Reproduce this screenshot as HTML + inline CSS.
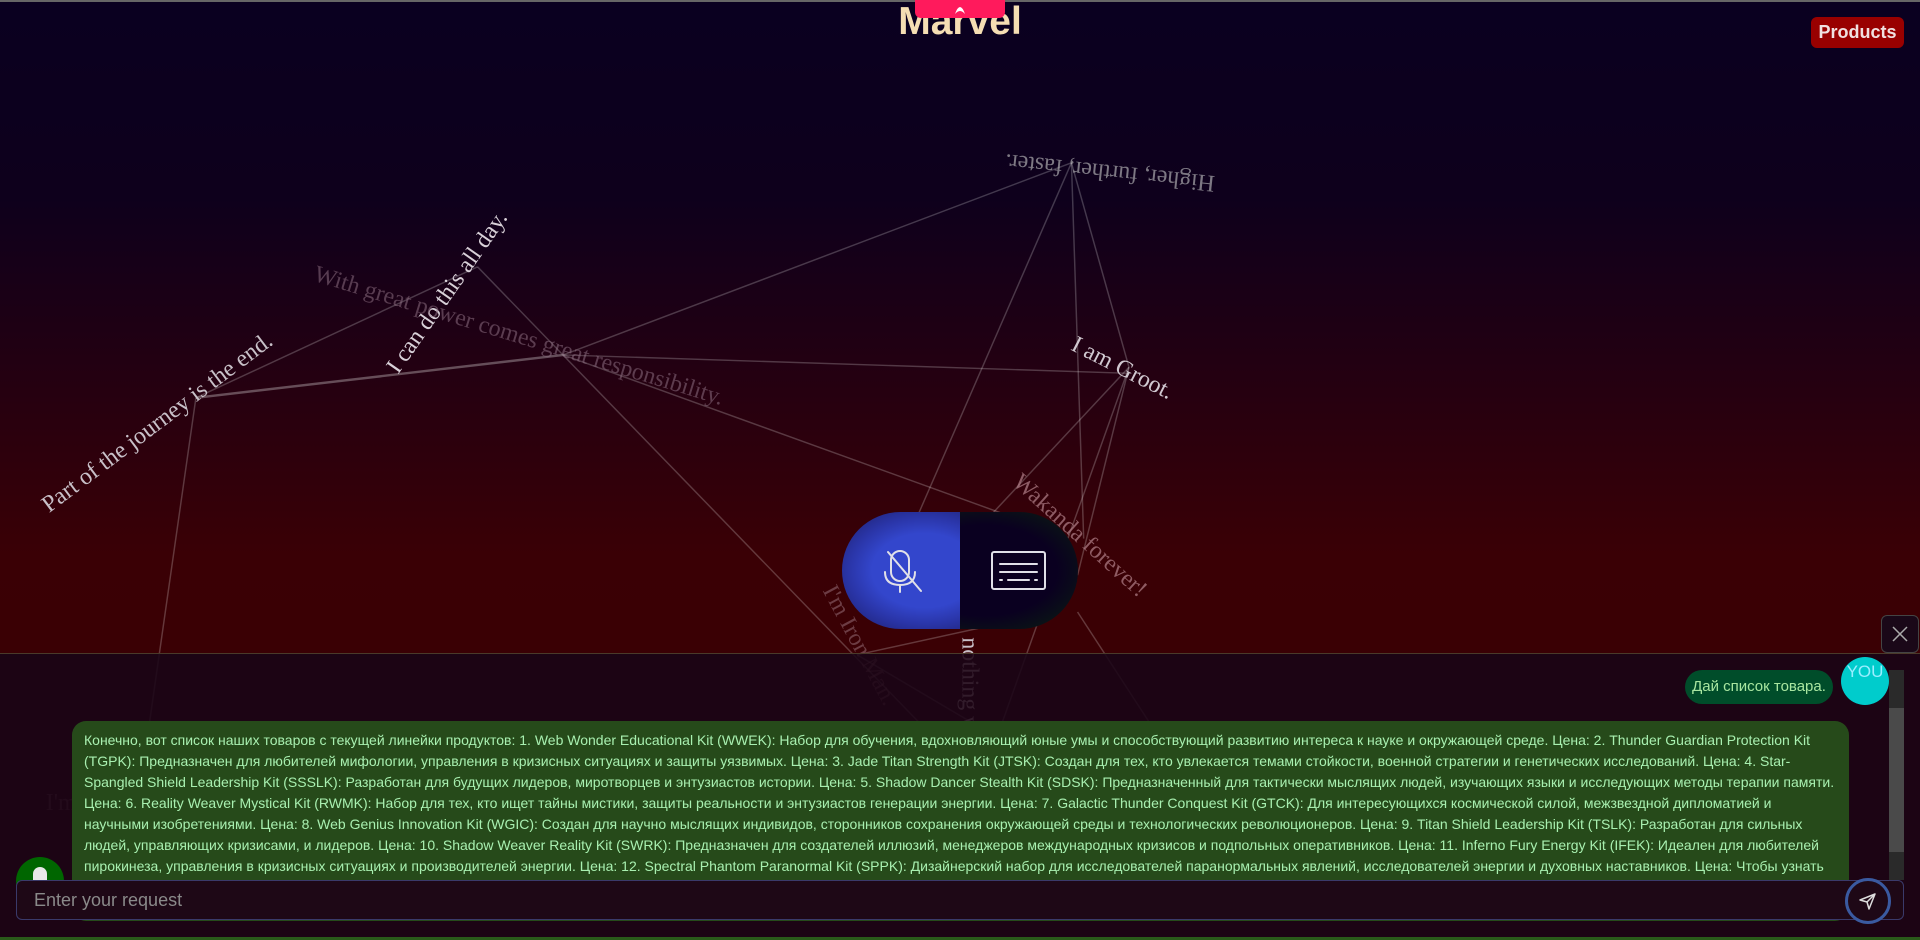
<!DOCTYPE html>
<html><head><meta charset="utf-8">
<style>
*{margin:0;padding:0;box-sizing:border-box}
html,body{width:1920px;height:940px;overflow:hidden;background:#1c0515;font-family:"Liberation Sans",sans-serif}
#bg{position:absolute;left:0;top:0;width:1920px;height:653px;background:linear-gradient(#0a0020 0%,#0e001c 30%,#260010 60%,#3a0005 85%,#3a0004 100%);border-top:2px solid #666}
#svg{position:absolute;left:0;top:0;width:1920px;height:940px}
.tab{position:absolute;left:915px;top:0;width:90px;height:18px;background:#ff1a5c;border-radius:0 0 6px 6px;z-index:3}
.title{position:absolute;left:0;width:1920px;top:0;text-align:center;font-size:39px;font-weight:bold;color:#f5deb3;line-height:44px;z-index:2}
.prod{position:absolute;left:1811px;top:17px;width:93px;height:31px;background:#990000;border-radius:6px;color:#f0e0e0;font-weight:bold;font-size:18px;line-height:31px;text-align:center}
.panel{position:absolute;left:0;top:653px;width:1920px;height:287px;background:rgba(28,5,21,0.88);border-top:1px solid #4a3a2a}
.pill{position:absolute;left:842px;top:512px;width:236px;height:117px;border-radius:59px;overflow:hidden;z-index:4}
.pl{position:absolute;left:0;top:0;width:118px;height:117px;background:radial-gradient(ellipse at 70% 50%,#3346cc 45%,#2a35a8 65%,#1a1a60 100%)}
.pr{position:absolute;left:118px;top:0;width:118px;height:117px;background:radial-gradient(ellipse at 20% 50%,#0a0020 55%,#0a1a12 90%)}
.close{position:absolute;left:1881px;top:615px;width:38px;height:38px;border:1px solid #444;border-radius:6px;background:#1a0818}
.you{position:absolute;left:1685px;top:670px;width:148px;height:34px;background:#004d2a;border-radius:17px;color:#a8e6a0;font-size:15px;line-height:34px;text-align:center}
.av{position:absolute;left:1841px;top:657px;width:48px;height:48px;border-radius:50%;background:#00cccc;color:#9ef;font-size:17px;text-align:center;line-height:22px;padding-top:4px}
.sb{position:absolute;left:1889px;top:670px;width:15px;height:210px;background:#2a2a2a}
.sb div{position:absolute;left:0;top:38px;width:15px;height:144px;background:#4a4a4a}
.bot{position:absolute;left:72px;top:721px;width:1777px;height:200px;background:#264a1a;border-radius:14px;color:#a8f0b0;font-size:14px;line-height:21px;padding:9px 12px;overflow:hidden}
.bot div{white-space:nowrap}
.gav{position:absolute;left:16px;top:857px;width:48px;height:48px;border-radius:50%;background:#006600}
.gav i{position:absolute;left:17px;top:10px;width:14px;height:20px;border-radius:7px;background:#e8e8e8}
.inp{position:absolute;left:16px;top:880px;width:1888px;height:40px;border:1px solid #3a3a6a;border-radius:6px;background:#1e0816;color:#8a8a8a;font-size:18px;line-height:38px;padding-left:17px}
.send{position:absolute;left:1845px;top:878px;width:46px;height:46px;border:3px solid #3a5aa0;border-radius:50%;background:#1e0816}
.green{position:absolute;left:0;top:937px;width:1920px;height:3px;background:#2a5a1a}
</style></head><body>
<div id="bg"></div>
<svg id="svg" viewBox="0 0 1568 768" preserveAspectRatio="none">
<g stroke="rgba(255,255,255,0.22)" stroke-width="1.2" fill="none">
<line x1="160" y1="325" x2="390" y2="218"/>
<line x1="160" y1="325" x2="460" y2="290" stroke="rgba(255,255,255,0.3)" stroke-width="2"/>
<line x1="160" y1="325" x2="115" y2="640"/>
<line x1="390" y1="218" x2="760" y2="600"/>
<line x1="460" y1="290" x2="875" y2="133"/>
<line x1="460" y1="290" x2="922" y2="305"/>
<line x1="460" y1="290" x2="820" y2="420"/>
<line x1="875" y1="133" x2="922" y2="300"/>
<line x1="875" y1="133" x2="750" y2="420"/>
<line x1="875" y1="133" x2="885" y2="440"/>
<line x1="922" y1="300" x2="810" y2="420"/>
<line x1="922" y1="300" x2="880" y2="470"/>
<line x1="922" y1="300" x2="815" y2="600"/>
<line x1="700" y1="535" x2="860" y2="500"/>
<line x1="700" y1="535" x2="810" y2="600"/>
<line x1="880" y1="500" x2="945" y2="600"/>
</g>
<g font-family="Liberation Serif,serif" font-size="19.5" text-anchor="middle">
<text transform="translate(907,135) rotate(186)" fill="rgba(200,200,200,0.6)">Higher, further, faster.</text>
<text transform="translate(370,242) rotate(-55)" fill="#d8d0d8">I can do this all day.</text>
<text transform="translate(422,280) rotate(17)" fill="rgba(140,110,130,0.55)">With great power comes great responsibility.</text>
<text transform="translate(132,350) rotate(-37)" fill="#c8c0c8">Part of the journey is the end.</text>
<text transform="translate(914,306) rotate(27)" fill="#d0c8d0">I am Groot.</text>
<text transform="translate(878,442) rotate(42)" fill="rgba(180,130,140,0.7)">Wakanda forever!</text>
<text transform="translate(697,530) rotate(62)" fill="rgba(150,110,120,0.55)">I'm Iron Man.</text>
<text transform="translate(786,560) rotate(90)" fill="#c8c0c8">nothing w</text>
<text x="50" y="662" fill="rgba(140,110,130,0.5)">I'm</text>
</g>
</svg>
<div class="tab"><svg width="90" height="18"><path d="M40 14 Q45 0 50 14 Q45 8 40 14Z" fill="#fff"/></svg></div>
<div class="title">Marvel</div>
<div class="prod">Products</div>
<div class="panel"></div>
<div class="pill"><div class="pl"></div><div class="pr"></div>
<svg style="position:absolute;left:0;top:0" width="236" height="117">
<g stroke="#e0e0e8" stroke-width="2" fill="none" stroke-linecap="round">
<rect x="49" y="39" width="18" height="30" rx="9"/>
<path d="M43 60 Q43 73 58 73 Q73 73 73 60"/><line x1="58" y1="73" x2="58" y2="80"/>
<line x1="46" y1="40" x2="79" y2="79"/>
<rect x="150" y="40" width="53" height="37" rx="2"/>
<line x1="158" y1="52" x2="195" y2="52"/><line x1="158" y1="60" x2="195" y2="60"/>
<line x1="158" y1="68" x2="160" y2="68"/><line x1="166" y1="68" x2="187" y2="68"/><line x1="193" y1="68" x2="195" y2="68"/>
</g></svg></div>
<div class="close"><svg width="36" height="36"><path d="M11 11L25 25M25 11L11 25" stroke="#aaa" stroke-width="1.5"/></svg></div>
<div class="you">Дай список товара.</div>
<div class="av">YOU</div>
<div class="sb"><div></div></div>
<div class="bot">
<div>Конечно, вот список наших товаров с текущей линейки продуктов: 1. Web Wonder Educational Kit (WWEK): Набор для обучения, вдохновляющий юные умы и способствующий развитию интереса к науке и окружающей среде. Цена: 2. Thunder Guardian Protection Kit</div>
<div>(TGPK): Предназначен для любителей мифологии, управления в кризисных ситуациях и защиты уязвимых. Цена: 3. Jade Titan Strength Kit (JTSK): Создан для тех, кто увлекается темами стойкости, военной стратегии и генетических исследований. Цена: 4. Star-</div>
<div>Spangled Shield Leadership Kit (SSSLK): Разработан для будущих лидеров, миротворцев и энтузиастов истории. Цена: 5. Shadow Dancer Stealth Kit (SDSK): Предназначенный для тактически мыслящих людей, изучающих языки и исследующих методы терапии памяти.</div>
<div>Цена: 6. Reality Weaver Mystical Kit (RWMK): Набор для тех, кто ищет тайны мистики, защиты реальности и энтузиастов генерации энергии. Цена: 7. Galactic Thunder Conquest Kit (GTCK): Для интересующихся космической силой, межзвездной дипломатией и</div>
<div>научными изобретениями. Цена: 8. Web Genius Innovation Kit (WGIC): Создан для научно мыслящих индивидов, сторонников сохранения окружающей среды и технологических революционеров. Цена: 9. Titan Shield Leadership Kit (TSLK): Разработан для сильных</div>
<div>людей, управляющих кризисами, и лидеров. Цена: 10. Shadow Weaver Reality Kit (SWRK): Предназначен для создателей иллюзий, менеджеров международных кризисов и подпольных оперативников. Цена: 11. Inferno Fury Energy Kit (IFEK): Идеален для любителей</div>
<div>пирокинеза, управления в кризисных ситуациях и производителей энергии. Цена: 12. Spectral Phantom Paranormal Kit (SPPK): Дизайнерский набор для исследователей паранормальных явлений, исследователей энергии и духовных наставников. Цена: Чтобы узнать</div>
<div>цены, пожалуйста, свяжитесь с нами.</div>
</div>
<div class="gav"><i></i></div>
<div class="inp">Enter your request</div>
<div class="send"><svg width="40" height="40"><path d="M27 13L12 19L19 21L21 28Z M19 21L27 13" stroke="#ddd" stroke-width="1.5" fill="none" stroke-linejoin="round"/></svg></div>
<div class="green"></div>
</body></html>
